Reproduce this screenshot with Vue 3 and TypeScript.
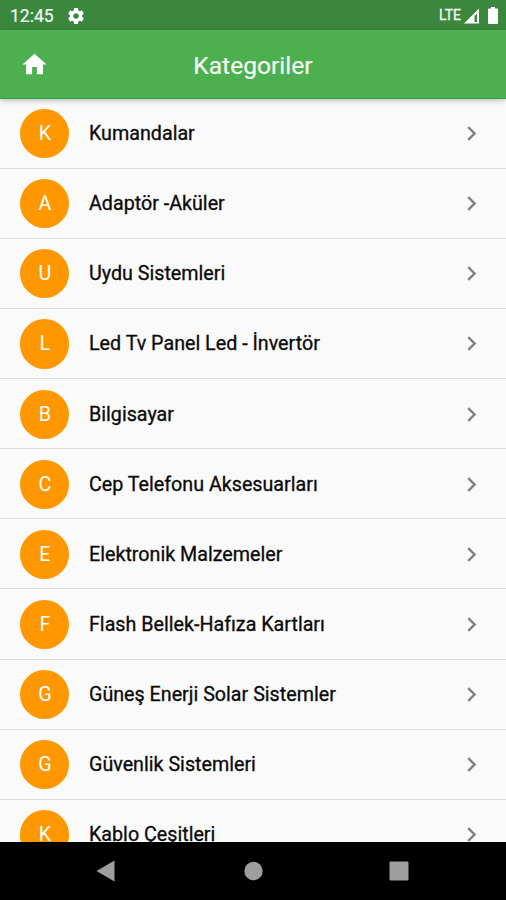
<script setup lang="ts">
const categories: string[] = [
  'Kumandalar',
  'Adaptör -Aküler',
  'Uydu Sistemleri',
  'Led Tv Panel Led - İnvertör',
  'Bilgisayar',
  'Cep Telefonu Aksesuarları',
  'Elektronik Malzemeler',
  'Flash Bellek-Hafıza Kartları',
  'Güneş Enerji Solar Sistemler',
  'Güvenlik Sistemleri',
  'Kablo Çeşitleri',
]
</script>

<template>
  <div class="screen">
    <div class="status">
      <span class="time">12:45</span>
      <svg class="gear" viewBox="2 2 20 20"><path d="M19.43 12.98c.04-.32.07-.64.07-.98s-.03-.66-.07-.98l2.11-1.65c.19-.15.24-.42.12-.64l-2-3.46c-.12-.22-.39-.3-.61-.22l-2.49 1c-.52-.4-1.08-.73-1.69-.98l-.38-2.65C14.46 2.18 14.25 2 14 2h-4c-.25 0-.46.18-.49.42l-.38 2.65c-.61.25-1.17.59-1.69.98l-2.49-1c-.23-.09-.49 0-.61.22l-2 3.46c-.13.22-.07.49.12.64l2.11 1.65c-.04.32-.07.65-.07.98s.03.66.07.98l-2.11 1.65c-.19.15-.24.42-.12.64l2 3.46c.12.22.39.3.61.22l2.49-1c.52.4 1.08.73 1.69.98l.38 2.65c.03.24.24.42.49.42h4c.25 0 .46-.18.49-.42l.38-2.65c.61-.25 1.17-.59 1.69-.98l2.49 1c.23.09.49 0 .61-.22l2-3.46c.12-.22.07-.49-.12-.64l-2.11-1.65zM12 15.5c-1.93 0-3.5-1.57-3.5-3.5s1.57-3.5 3.5-3.5 3.5 1.57 3.5 3.5-1.57 3.5-3.5 3.5z" /></svg>
      <span class="lte">LTE</span>
      <svg class="signal" viewBox="0 0 16 16"><path fill-rule="evenodd" d="M0 16 16 0v16zM11.200 8v6.500h2.800V5.200z" /></svg>
      <svg class="battery" viewBox="0 0 10 17"><path d="M3 0h4v1.500h2a1 1 0 0 1 1 1V16a1 1 0 0 1-1 1H1a1 1 0 0 1-1-1V2.500a1 1 0 0 1 1-1h2z" /></svg>
    </div>
    <header class="appbar">
      <svg class="home" viewBox="0 0 24 24"><path d="M10 20v-6h4v6h5v-8h3L12 3 2 12h3v8z" /></svg>
      <h1 class="title">Kategoriler</h1>
    </header>
    <ul class="list">
      <li v-for="name in categories" :key="name" class="row">
        <span class="avatar">{{ name.charAt(0) }}</span>
        <span class="name">{{ name }}</span>
        <svg class="chevron" viewBox="0 0 24 24"><path d="M10 6 8.590 7.410 13.170 12l-4.580 4.590L10 18l6-6z" /></svg>
      </li>
    </ul>
    <nav class="navbar">
      <svg viewBox="0 0 20 22"><path d="M.500 11 18.500.500v21z" /></svg>
      <svg viewBox="0 0 20 22"><circle cx="10.500" cy="11" r="9.200" /></svg>
      <svg viewBox="0 0 20 22"><rect x=".500" y="1.500" width="19" height="19" rx="1.200" /></svg>
    </nav>
  </div>
</template>

<style>
body {
  margin: 0;
}
</style>

<style scoped>
.screen {
  display: flex;
  flex-direction: column;
  width: 506px;
  height: 900px;
  overflow: hidden;
  background: #fafafa;
  font-family: Roboto, sans-serif;
}
.status {
  display: flex;
  align-items: center;
  flex: none;
  box-sizing: border-box;
  height: 30px;
  padding: 1px 8px 0 10px;
  background: #3b873e;
  color: #f1f8f1;
  fill: #fff;
}
.time {
  width: 58px;
  font-size: 17.500px;
  -webkit-text-stroke: 0.200px #f1f8f1;
}
.gear {
  width: 16px;
  height: 16px;
}
.lte {
  margin-left: auto;
  margin-bottom: 1px;
  font-size: 14px;
  -webkit-text-stroke: 0.300px #f1f8f1;
}
.signal {
  width: 15px;
  height: 16px;
  margin-left: 3px;
}
.battery {
  width: 10px;
  height: 17px;
  margin-left: 9px;
}
.appbar {
  position: relative;
  z-index: 1;
  display: grid;
  grid-template-columns: 69px 1fr 69px;
  align-items: center;
  flex: none;
  box-sizing: border-box;
  height: 68.500px;
  background: #4caf50;
  border-bottom: 1px solid #35a03c;
  box-shadow: 0 2px 5px rgba(0, 0, 0, 0.22);
}
.home {
  justify-self: center;
  width: 29px;
  height: 29px;
  margin-top: 1px;
  fill: #fff;
}
.title {
  margin: 4px 0 0;
  color: #f4fbf4;
  font-size: 24.600px;
  font-weight: 400;
  text-align: center;
  -webkit-text-stroke: 0.200px #f4fbf4;
}
.list {
  flex: 1;
  min-height: 0;
  margin: 0;
  padding: 0;
  overflow: hidden;
  list-style: none;
}
.row {
  display: flex;
  align-items: center;
  box-sizing: border-box;
  height: 70.150px;
  padding: 1px 20px 0 20.300px;
  border-bottom: 1px solid #dedede;
}
.avatar {
  display: flex;
  align-items: center;
  justify-content: center;
  width: 49.200px;
  height: 49.200px;
  margin-right: 19.500px;
  border-radius: 50%;
  background: #ff9800;
  color: #fff;
  font-size: 19.700px;
}
.name {
  flex: 1;
  color: #0a0a0a;
  font-size: 19.700px;
  -webkit-text-stroke: 0.300px #0a0a0a;
}
.chevron {
  width: 29px;
  height: 29px;
  fill: #828282;
}
.navbar {
  display: flex;
  align-items: center;
  justify-content: space-between;
  flex: none;
  box-sizing: border-box;
  height: 58.500px;
  padding: 0 97px 0 96px;
  background: #000;
  fill: #9e9e9e;
}
.navbar svg {
  width: 20px;
  height: 22px;
}
</style>
